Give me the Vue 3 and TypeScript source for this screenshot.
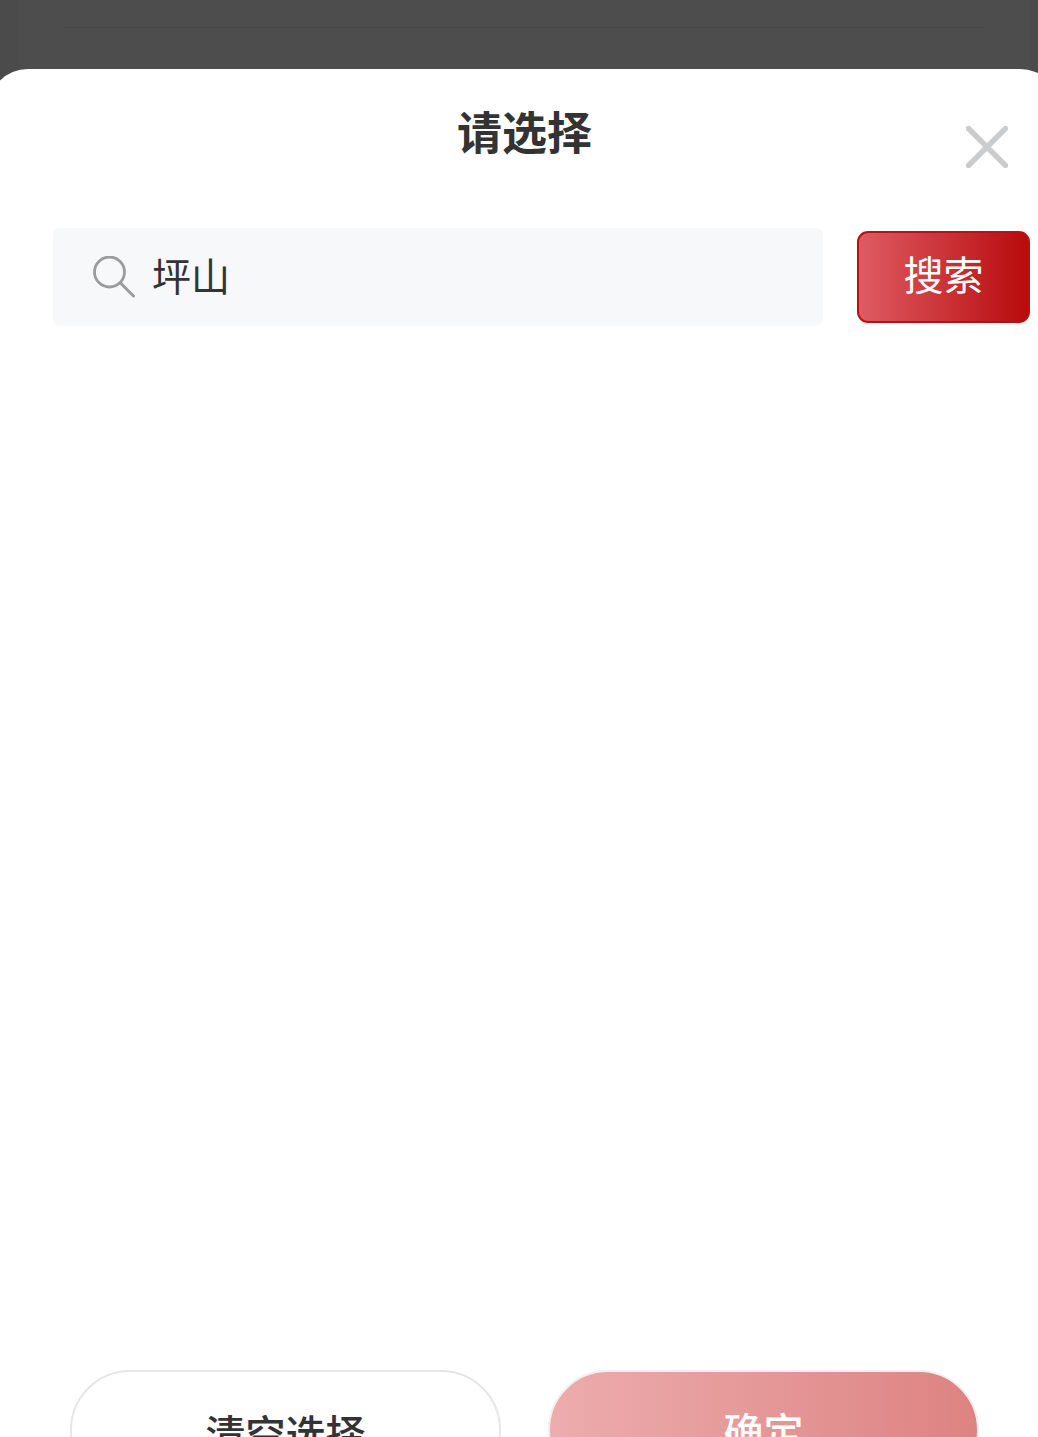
<script setup lang="ts">
const title = '请选择'
const keyword = '坪山'
</script>

<template>
  <div class="page">
    <div class="backdrop">
      <div class="ghost-col">
        <div class="ghost-line"></div>
      </div>
    </div>
    <div class="sheet">
      <div class="head">
        <h1 class="title">{{ title }}</h1>
        <svg class="close" viewBox="0 0 42 42" fill="none" aria-label="关闭">
          <path d="M2.5 2.5 39.5 39.5M39.5 2.5 2.5 39.5" stroke="#cbccce" stroke-width="5.4" stroke-linecap="round" />
        </svg>
      </div>
      <div class="search">
        <div class="field">
          <svg class="glass" viewBox="0 0 42 42" fill="none">
            <circle cx="16.5" cy="16" r="15" stroke="#9b9b9b" stroke-width="2.8" />
            <path d="M27.5 27 40.5 40" stroke="#9b9b9b" stroke-width="3" stroke-linecap="round" />
          </svg>
          <span class="keyword">{{ keyword }}</span>
        </div>
        <button class="go" type="button">搜索</button>
      </div>
      <div class="results"></div>
      <div class="foot">
        <button class="btn clear" type="button">清空选择</button>
        <button class="btn ok" type="button">确定</button>
      </div>
    </div>
  </div>
</template>

<style>
html, body { margin: 0; background: #fff; }
</style>

<style scoped>
.page {
  width: 1038px;
  height: 1437px;
  overflow: hidden;
  display: flex;
  flex-direction: column;
  background: #4b4b4b;
  font-family: "Noto Sans CJK SC", "Noto Sans", sans-serif;
}
.backdrop {
  flex: 0 0 69px;
  background: #4b4b4b;
  padding: 0 8px 0 19px;
}
.ghost-col {
  height: 100%;
  background: #4d4d4d;
  padding: 27px 45px 0 46px;
  box-sizing: border-box;
}
.ghost-line {
  height: 1px;
  background: #484848;
}
.sheet {
  flex: 1;
  margin: 0 -22px 0 -12px;
  background: #fff;
  border-radius: 40px 40px 0 0;
  display: flex;
  flex-direction: column;
  overflow: hidden;
}
.head {
  height: 159px;
  flex: none;
  display: flex;
  justify-content: space-between;
  align-items: flex-start;
  padding: 0 52px 0 469px;
  box-sizing: border-box;
}
.title {
  margin: 34px 0 0;
  font-size: 45px;
  line-height: 56px;
  font-weight: 700;
  color: #333;
}
.close {
  width: 42px;
  height: 42px;
  margin-top: 57px;
}
.search {
  flex: none;
  display: flex;
  align-items: center;
  gap: 34px;
  padding: 0 30px 0 65px;
}
.field {
  width: 770px;
  height: 98px;
  box-sizing: border-box;
  padding-left: 40px;
  background: #f7f8fa;
  border-radius: 7px;
  display: flex;
  align-items: center;
  gap: 17px;
}
.glass {
  width: 42px;
  height: 42px;
}
.keyword {
  font-size: 39px;
  line-height: 56px;
  margin-bottom: 6px;
  color: #333;
}
.go {
  width: 173px;
  height: 92px;
  padding: 0 0 8px;
  border: 2px solid #bb1013;
  border-radius: 11px;
  background: linear-gradient(90deg, #de5c62, #b80b0d);
  color: #fff;
  font: inherit;
  font-size: 40px;
  font-weight: 400;
}
.results {
  flex: 1;
}
.foot {
  flex: none;
  height: 67px;
  display: flex;
  gap: 47px;
  padding-left: 82px;
}
.btn {
  width: 431px;
  height: 120px;
  padding: 0;
  box-sizing: border-box;
  border-radius: 60px;
  font: inherit;
  font-size: 40px;
  font-weight: 500;
  line-height: 56px;
}
.clear {
  padding-top: 3px;
  background: #fff;
  border: 2px solid #e6e6e6;
  color: #333;
}
.ok {
  background: linear-gradient(90deg, #edacad, #dd8382);
  border: 2px solid #f0eeee;
  color: #fff;
}
</style>
